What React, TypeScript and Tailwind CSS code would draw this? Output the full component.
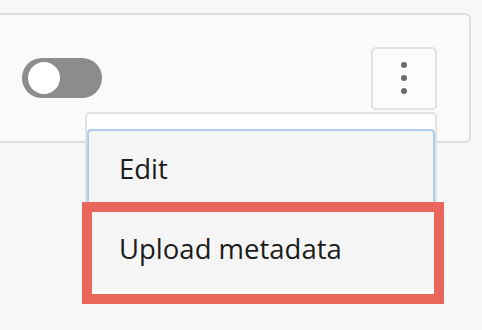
import { useState } from 'react';

export default function App() {
  const [on, setOn] = useState(false);

  return (
    <div
      className="relative min-h-[330px] w-[482px] overflow-hidden bg-[#f7f7f7] pt-[13px]"
      style={{ fontFamily: '"Open Sans", "Noto Sans", sans-serif' }}
    >
      <div className="ml-[-10px] flex h-[130px] w-[481px] items-center justify-between rounded-[6px] border-2 border-[#dddddd] bg-[#fafafa] pl-[30px] pr-[32px]">
        <button
          onClick={() => setOn(!on)}
          className="flex h-[40px] w-[80px] items-center rounded-full bg-[#8c8c8c] px-[6px]"
        >
          <span className="h-[32px] w-[32px] rounded-full bg-white" />
        </button>

        <div className="relative">
          <button className="flex h-[63px] w-[66px] flex-col items-center justify-center gap-[7px] rounded-[5px] border-2 border-[#e2e2e2] bg-[#fcfcfc]">
            <span className="h-[6px] w-[6px] rounded-full bg-[#6b6b6b]" />
            <span className="h-[6px] w-[6px] rounded-full bg-[#6b6b6b]" />
            <span className="h-[6px] w-[6px] rounded-full bg-[#6b6b6b]" />
          </button>

          <div className="absolute right-0 top-full z-10 mt-[2px] w-[352px] rounded-[5px] border-2 border-[#e2e2e2] bg-white pb-[6px] pt-[15px]">
            <div className="flex h-[81px] items-center rounded-[4px] border-2 border-[#aecde9] bg-[#f5f5f5] pl-[30px] text-[27.5px] text-[#1c1c1c]">
              Edit
            </div>
            <div className="flex h-[79px] items-center bg-[#f5f5f5] pl-[32px] text-[27.5px] text-[#1c1c1c]">
              Upload metadata
            </div>
          </div>
        </div>
      </div>

      <div className="pointer-events-none absolute left-[82px] top-[202px] z-20 h-[102px] w-[362px] border-[10px] border-[#e8665a]" />
    </div>
  );
}
